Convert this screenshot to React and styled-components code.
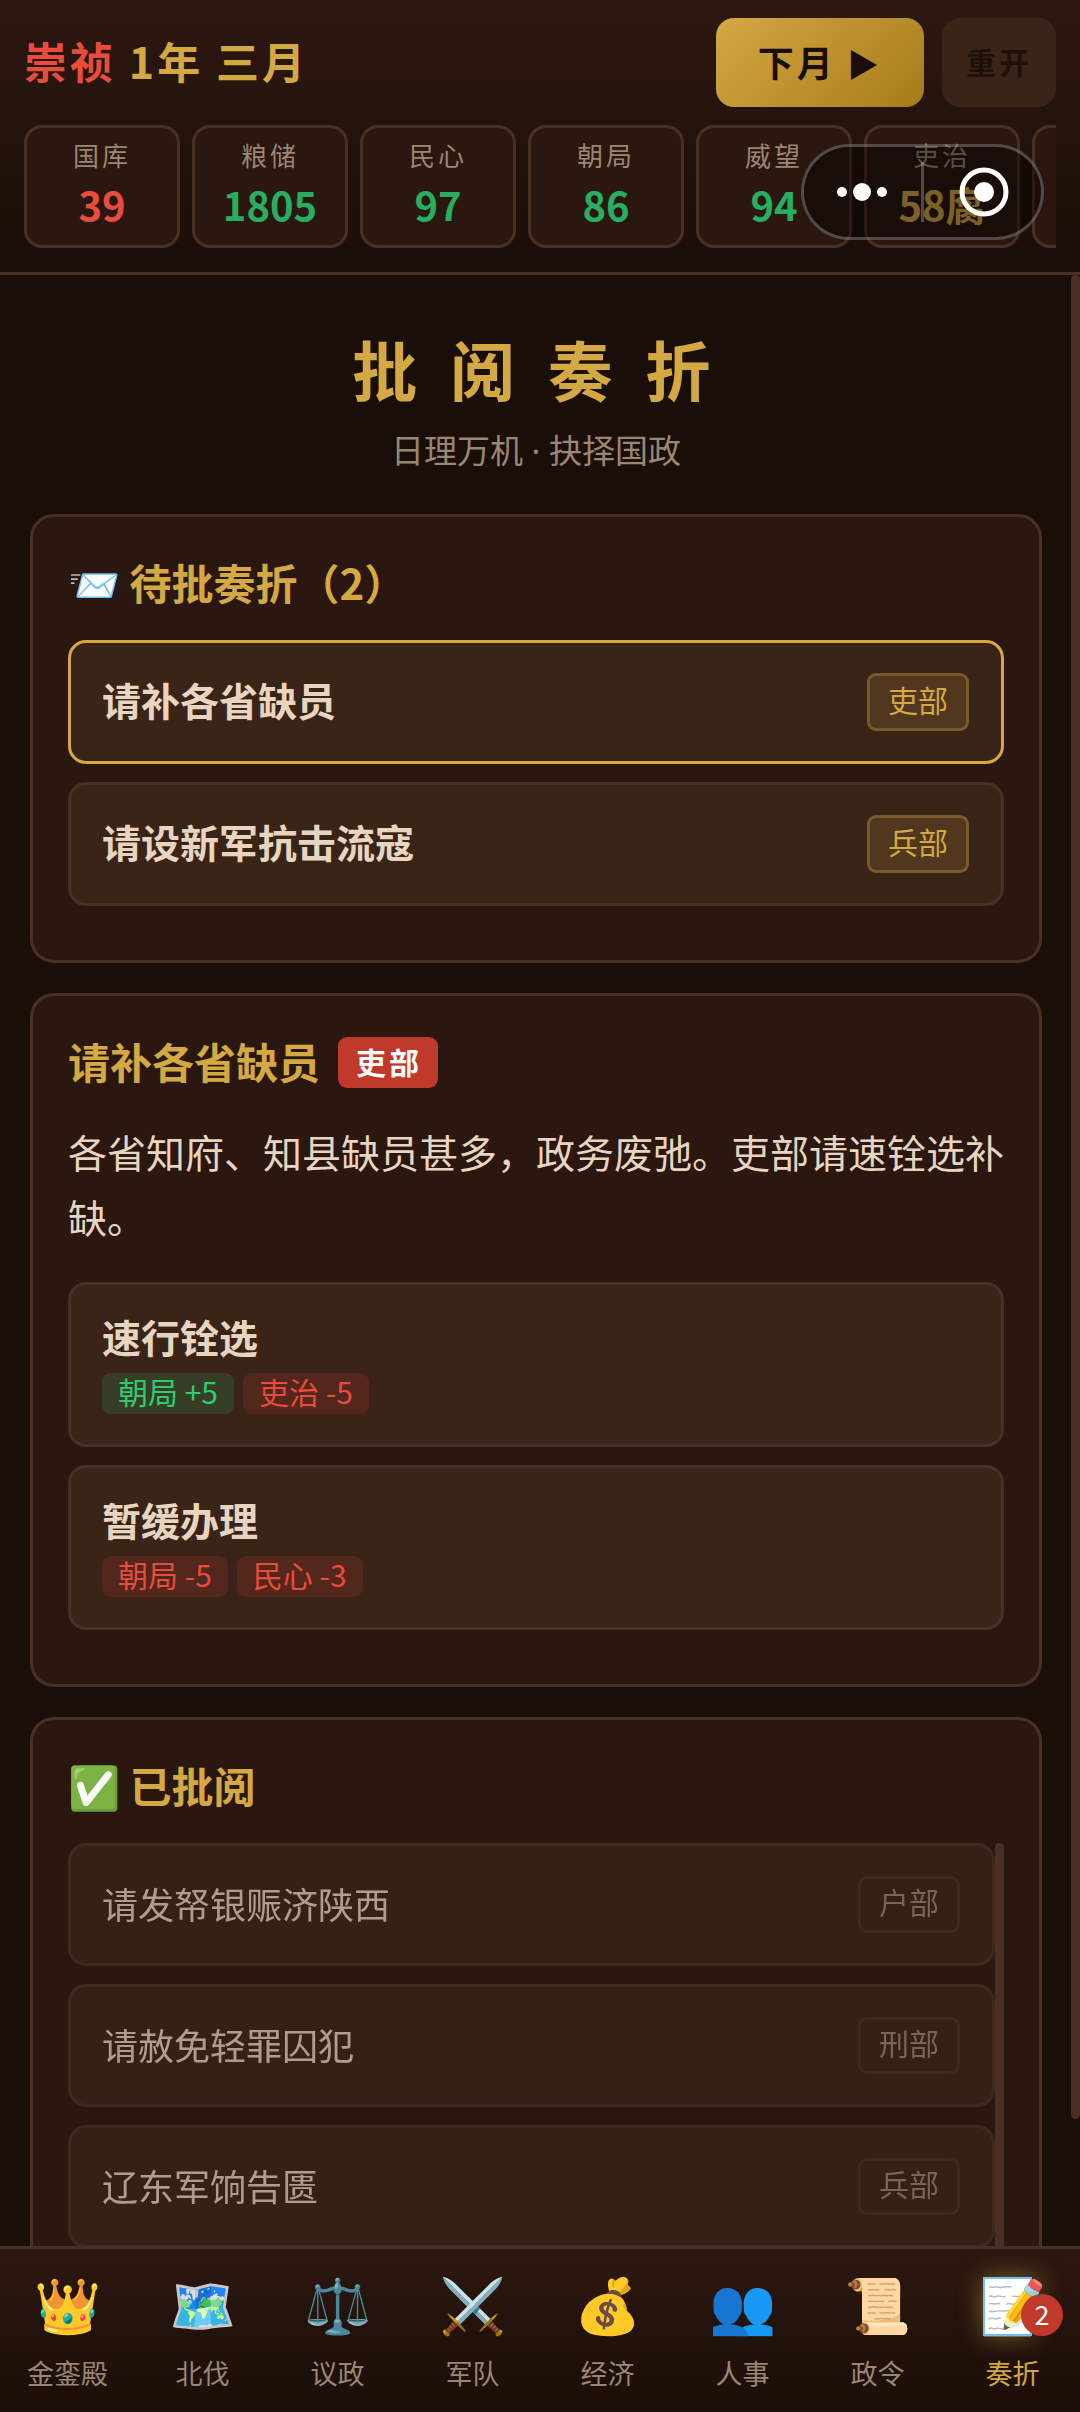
import styled, { createGlobalStyle } from "styled-components";

const stats = [
  { label: "国库", value: "39", color: "#e74c3c" },
  { label: "粮储", value: "1805", color: "#27ae60" },
  { label: "民心", value: "97", color: "#27ae60" },
  { label: "朝局", value: "86", color: "#27ae60" },
  { label: "威望", value: "94", color: "#27ae60" },
  { label: "吏治", value: "58腐", color: "#d4a843" },
];

const pending = [
  { title: "请补各省缺员", dept: "吏部" },
  { title: "请设新军抗击流寇", dept: "兵部" },
];

const options = [
  {
    title: "速行铨选",
    effects: [
      { text: "朝局 +5", good: true },
      { text: "吏治 -5", good: false },
    ],
  },
  {
    title: "暂缓办理",
    effects: [
      { text: "朝局 -5", good: false },
      { text: "民心 -3", good: false },
    ],
  },
];

const done = [
  { title: "请发帑银赈济陕西", dept: "户部" },
  { title: "请赦免轻罪囚犯", dept: "刑部" },
  { title: "辽东军饷告匮", dept: "兵部" },
];

const tabs = [
  { label: "金銮殿", icon: "👑" },
  { label: "北伐", icon: "🗺️" },
  { label: "议政", icon: "⚖️" },
  { label: "军队", icon: "⚔️" },
  { label: "经济", icon: "💰" },
  { label: "人事", icon: "👥" },
  { label: "政令", icon: "📜" },
  { label: "奏折", icon: "📝", badge: 2, active: true },
];

const App = () => {
  return (
    <>
      <GlobalStyle />
      <Page>
        <Header>
          <TopRow>
            <DateText>
              <Reign>崇祯</Reign> 1年 三月
            </DateText>
            <Actions>
              <NextButton type="button">
                下月 <Arrow>▶</Arrow>
              </NextButton>
              <ResetButton type="button" disabled>
                重开
              </ResetButton>
            </Actions>
          </TopRow>
          <StatRow>
            {stats.map((stat) => (
              <StatCard key={stat.label}>
                <StatLabel>{stat.label}</StatLabel>
                <StatValue $color={stat.color}>{stat.value}</StatValue>
              </StatCard>
            ))}
            <StatCard />
          </StatRow>
          <Capsule>
            <CapsuleButton type="button" aria-label="更多">
              <svg width="54" height="54" viewBox="0 0 54 54" fill="#fff">
                <circle cx="6" cy="27" r="5" />
                <circle cx="26" cy="27" r="9" />
                <circle cx="46" cy="27" r="5" />
              </svg>
            </CapsuleButton>
            <CapsuleDivider />
            <CapsuleButton type="button" aria-label="关闭">
              <svg width="54" height="54" viewBox="0 0 54 54">
                <circle cx="28" cy="27" r="22" fill="none" stroke="#fff" strokeWidth="5" />
                <circle cx="28" cy="27" r="10" fill="#fff" />
              </svg>
            </CapsuleButton>
          </Capsule>
        </Header>

        <Body>
          <Main>
            <PageTitle>批 阅 奏 折</PageTitle>
            <Subtitle>日理万机 · 抉择国政</Subtitle>

            <Card>
              <CardTitle>📨 待批奏折（2）</CardTitle>
              {pending.map((item, index) => (
                <PendingItem key={item.title} type="button" $selected={index === 0}>
                  <PendingTitle>{item.title}</PendingTitle>
                  <DeptTag>{item.dept}</DeptTag>
                </PendingItem>
              ))}
            </Card>

            <Card>
              <CardTitle>
                请补各省缺员<DeptBadge>吏部</DeptBadge>
              </CardTitle>
              <Detail>各省知府、知县缺员甚多，政务废弛。吏部请速铨选补缺。</Detail>
              {options.map((option) => (
                <OptionItem key={option.title} type="button">
                  <OptionTitle>{option.title}</OptionTitle>
                  <EffectRow>
                    {option.effects.map((effect) => (
                      <Effect key={effect.text} $good={effect.good}>
                        {effect.text}
                      </Effect>
                    ))}
                  </EffectRow>
                </OptionItem>
              ))}
            </Card>

            <Card>
              <CardTitle>✅ 已批阅</CardTitle>
              <DoneWrapper>
                <DoneList>
                  {done.map((item) => (
                    <DoneItem key={item.title}>
                      <DoneTitle>{item.title}</DoneTitle>
                      <DoneTag>{item.dept}</DoneTag>
                    </DoneItem>
                  ))}
                </DoneList>
                <ScrollThumb />
              </DoneWrapper>
            </Card>
          </Main>
          <ScrollTrack>
            <ScrollThumb />
          </ScrollTrack>
        </Body>

        <TabBar>
          {tabs.map((tab) => (
            <Tab key={tab.label} type="button" $active={tab.active}>
              <TabIcon $active={tab.active}>{tab.icon}</TabIcon>
              <TabLabel>{tab.label}</TabLabel>
              {tab.badge && <TabBadge>{tab.badge}</TabBadge>}
            </Tab>
          ))}
        </TabBar>
      </Page>
    </>
  );
};

export default App;

const GlobalStyle = createGlobalStyle`
  * {
    box-sizing: border-box;
  }

  body {
    margin: 0;
    background: #1a0e08;
    color: #e8d5c0;
    font-family: "Noto Sans CJK SC", sans-serif;
  }

  button {
    font-family: inherit;
    color: inherit;
    cursor: pointer;
  }
`;

const Page = styled.div`
  display: flex;
  flex-direction: column;
  height: 100vh;
`;

const Header = styled.header`
  position: relative;
  flex-shrink: 0;
  padding: 18px 24px 24px;
  background: linear-gradient(180deg, #2c1810 0%, #1a0e08 100%);
  border-bottom: 3px solid #4a3024;
`;

const TopRow = styled.div`
  display: flex;
  justify-content: space-between;
  align-items: center;
  margin-bottom: 18px;
`;

const DateText = styled.div`
  padding-bottom: 6px;
  color: #d4a843;
  font-size: 43px;
  font-weight: bold;
  letter-spacing: 3px;
`;

const Reign = styled.span`
  color: #e74c3c;
`;

const Actions = styled.div`
  display: flex;
  gap: 18px;
`;

const NextButton = styled.button`
  height: 89px;
  padding: 0 42px 4px;
  border: none;
  border-radius: 18px;
  background: linear-gradient(135deg, #d4a843, #a67c1a);
  color: #1a0e08;
  font-size: 36px;
  font-weight: bold;
  letter-spacing: 3px;
`;

const Arrow = styled.span`
  font-size: 32px;
`;

const ResetButton = styled.button`
  height: 89px;
  padding: 0 24px 4px;
  border: none;
  border-radius: 18px;
  background: #3a2418;
  color: #1e110b;
  font-size: 30px;
  font-weight: bold;
  letter-spacing: 3px;
`;

const StatRow = styled.div`
  display: flex;
  gap: 12px;
  overflow: hidden;
`;

const StatCard = styled.div`
  flex: 0 0 156px;
  height: 123px;
  padding-top: 8px;
  border: 3px solid #4a3024;
  border-radius: 18px;
  background: #2a170f;
  text-align: center;
`;

const StatLabel = styled.div`
  color: #9a8672;
  font-size: 26px;
  line-height: 38px;
  letter-spacing: 3px;
`;

const StatValue = styled.div`
  color: ${({ $color }) => $color};
  font-size: 40px;
  font-weight: bold;
  line-height: 60px;
`;

const Capsule = styled.div`
  position: absolute;
  top: 144px;
  right: 36px;
  display: flex;
  align-items: center;
  width: 243px;
  height: 96px;
  border: 3px solid rgba(255, 255, 255, 0.25);
  border-radius: 48px;
  background: rgba(0, 0, 0, 0.42);
`;

const CapsuleButton = styled.button`
  flex: 1;
  display: flex;
  justify-content: center;
  padding: 0;
  border: none;
  background: none;
`;

const CapsuleDivider = styled.div`
  width: 3px;
  height: 60px;
  background: rgba(255, 255, 255, 0.25);
`;

const Body = styled.div`
  display: flex;
  flex: 1;
  min-height: 0;
`;

const Main = styled.main`
  flex: 1;
  padding: 51px 29px 30px 30px;
  overflow-y: auto;
  scrollbar-width: none;
`;

const ScrollTrack = styled.div`
  width: 9px;
  padding-bottom: 127px;
  display: flex;
`;

const ScrollThumb = styled.div`
  width: 9px;
  border-radius: 5px;
  background: #4a3024;
`;

const PageTitle = styled.h1`
  margin: 0 0 15px;
  color: #d4a843;
  font-size: 65px;
  font-weight: bold;
  line-height: 84px;
  letter-spacing: 9px;
  text-align: center;
`;

const Subtitle = styled.p`
  margin: 0 0 38px;
  color: #9a8672;
  font-family: "Noto Sans", "Noto Sans CJK SC", sans-serif;
  font-size: 33px;
  line-height: 51px;
  text-align: center;
`;

const Card = styled.section`
  margin-bottom: 30px;
  padding: 36px 35px;
  border: 3px solid #4a3024;
  border-radius: 24px;
  background: #2a170f;
`;

const CardTitle = styled.h2`
  display: flex;
  align-items: center;
  margin: 0 0 30px;
  color: #d4a843;
  font-size: 42px;
  font-weight: bold;
  line-height: 57px;
`;

const PendingItem = styled.button`
  display: flex;
  justify-content: space-between;
  align-items: center;
  width: 100%;
  margin-bottom: 18px;
  padding: 30px 32px 30px 31px;
  border: 3px solid ${({ $selected }) => ($selected ? "#d4a843" : "#4a3024")};
  border-radius: 18px;
  background: #3a2418;
`;

const PendingTitle = styled.span`
  padding-bottom: 6px;
  font-size: 39px;
  font-weight: bold;
  line-height: 48px;
`;

const DeptTag = styled.span`
  padding: 3px 18px 9px;
  border: 3px solid rgba(212, 168, 67, 0.3);
  border-radius: 9px;
  background: rgba(212, 168, 67, 0.15);
  color: #d4a843;
  font-size: 30px;
  line-height: 40px;
`;

const DeptBadge = styled.span`
  margin: 4px 0 0 18px;
  padding: 5px 16px 7px 18px;
  border-radius: 9px;
  background: #c0392b;
  color: #fff;
  font-size: 30px;
  line-height: 39px;
  letter-spacing: 3px;
`;

const Detail = styled.p`
  margin: 0;
  padding-bottom: 33px;
  font-size: 39px;
  line-height: 65px;
`;

const OptionItem = styled.button`
  display: block;
  width: 100%;
  margin-bottom: 18px;
  padding: 28px 31px 30px;
  border: 3px solid #4a3024;
  border-radius: 18px;
  background: #3a2418;
  text-align: left;
`;

const OptionTitle = styled.div`
  margin-bottom: 14px;
  font-size: 39px;
  font-weight: bold;
  line-height: 46px;
`;

const EffectRow = styled.div`
  display: flex;
  gap: 9px;
`;

const Effect = styled.span`
  padding: 0 16px 4px;
  border-radius: 9px;
  background: ${({ $good }) =>
    $good ? "rgba(39, 174, 96, 0.2)" : "rgba(192, 57, 43, 0.2)"};
  color: ${({ $good }) => ($good ? "#2ecc71" : "#e74c3c")};
  font-size: 30px;
  line-height: 37px;
`;

const DoneWrapper = styled.div`
  display: flex;
`;

const DoneList = styled.ul`
  flex: 1;
  margin: 0;
  padding: 0;
  list-style: none;
`;

const DoneItem = styled.li`
  display: flex;
  justify-content: space-between;
  align-items: center;
  margin-bottom: 18px;
  padding: 30px 32px 30px 31px;
  border: 3px solid #4a3024;
  border-radius: 18px;
  background: #3a2418;
  opacity: 0.7;
`;

const DoneTitle = styled.span`
  padding-bottom: 4px;
  font-size: 36px;
  line-height: 48px;
`;

const DoneTag = styled.span`
  padding: 3px 18px 9px;
  border: 3px solid #4a3024;
  border-radius: 9px;
  color: #9a8672;
  font-size: 30px;
  line-height: 39px;
`;

const TabBar = styled.nav`
  display: flex;
  flex-shrink: 0;
  height: 166px;
  border-top: 3px solid #4a3024;
  background: linear-gradient(180deg, #2c1810 0%, #1a0e08 100%);
`;

const Tab = styled.button`
  position: relative;
  flex: 1;
  display: flex;
  flex-direction: column;
  align-items: center;
  padding: 20px 0 0;
  border: none;
  background: none;
  color: ${({ $active }) => ($active ? "#d4a843" : "#9a8672")};
`;

const TabIcon = styled.span`
  font-size: 54px;
  line-height: 66px;
  filter: ${({ $active }) =>
    $active ? "drop-shadow(0 0 12px rgba(212, 168, 67, 0.5))" : "none"};
`;

const TabLabel = styled.span`
  margin-top: 17px;
  font-size: 27px;
  line-height: 42px;
`;

const TabBadge = styled.span`
  position: absolute;
  top: 45px;
  right: 17px;
  width: 42px;
  height: 42px;
  border-radius: 50%;
  background: #c0392b;
  color: #fff;
  font-size: 27px;
  line-height: 40px;
  text-align: center;
`;
